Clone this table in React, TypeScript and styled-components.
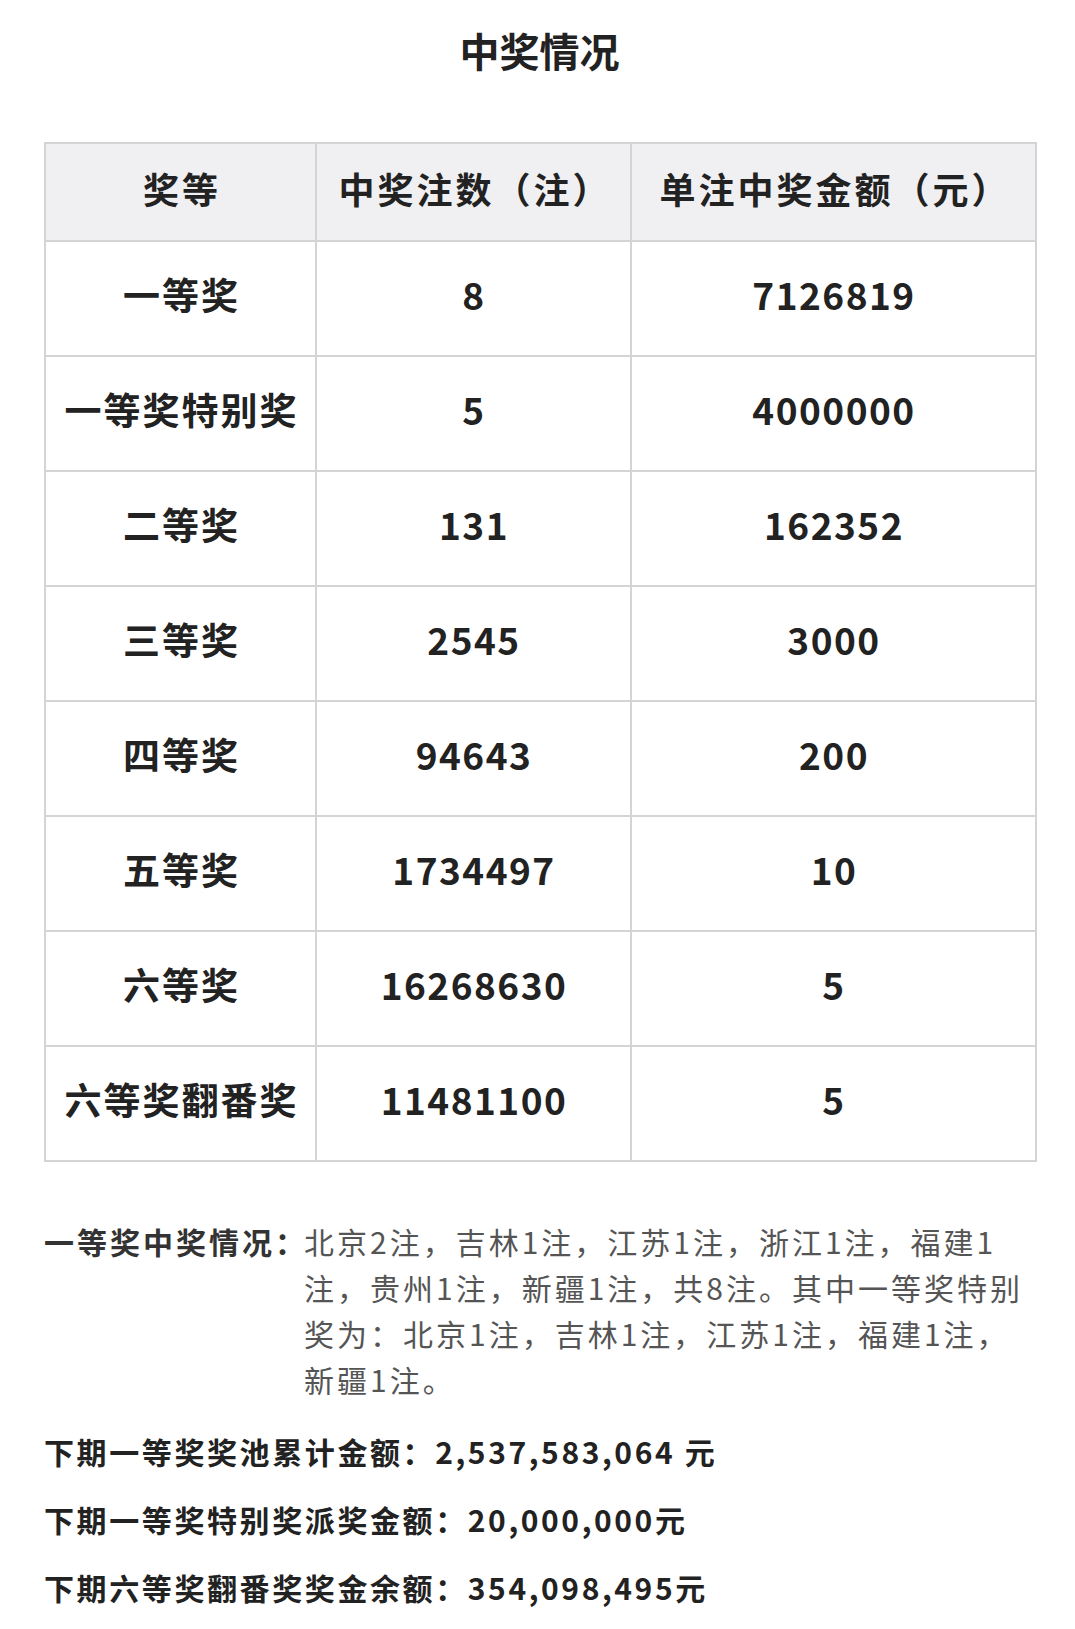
import styled, { createGlobalStyle } from "styled-components";

const GlobalStyle = createGlobalStyle`
  body {
    margin: 0;
    background: #ffffff;
    font-family: "Noto Sans CJK SC", "Noto Sans", sans-serif;
    color: #222222;
  }
`;

const Page = styled.div`
  width: 1075px;
  padding: 20px 40px 40px 44px;
  box-sizing: border-box;
`;

const Title = styled.h1`
  margin: 0;
  text-align: center;
  font-size: 40px;
  font-weight: 700;
  line-height: 60px;
  color: #222222;
`;

const Table = styled.table`
  margin-top: 62px;
  width: 991px;
  border-collapse: collapse;
  border: 2px solid #d4d4d6;
  table-layout: fixed;
`;

const HeadCell = styled.th`
  height: 88px;
  background: #f0f0f3;
  border: 2px solid #d4d4d6;
  font-size: 36px;
  font-weight: 700;
  letter-spacing: 3px;
  color: #222222;
  text-align: center;
  padding: 0 0 8px 3px;
`;

const Cell = styled.td<{ $num?: boolean }>`
  height: 103px;
  border: 2px solid #d4d4d6;
  font-size: 37px;
  font-weight: 700;
  color: #222222;
  text-align: center;
  padding: 0 0 10px ${(p) => (p.$num ? "1px" : "2px")};
  white-space: nowrap;
  letter-spacing: ${(p) => (p.$num ? "1.5px" : "2px")};
`;

const Detail = styled.div`
  display: grid;
  grid-template-columns: 260px 728px;
  margin-top: 56px;
  font-size: 30px;
  line-height: 46px;
  letter-spacing: 3px;
`;

const DetailLabel = styled.div`
  font-weight: 700;
  color: #333333;
  white-space: nowrap;
`;

const DetailText = styled.div`
  color: #555555;
`;

const Summary = styled.div`
  display: flex;
  flex-direction: column;
  gap: 24px;
  margin-top: 27px;
`;

const SummaryLine = styled.div`
  font-size: 30px;
  font-weight: 700;
  line-height: 44px;
  letter-spacing: 2.6px;
  color: #222222;
`;

const rows: [string, string, string][] = [
  ["一等奖", "8", "7126819"],
  ["一等奖特别奖", "5", "4000000"],
  ["二等奖", "131", "162352"],
  ["三等奖", "2545", "3000"],
  ["四等奖", "94643", "200"],
  ["五等奖", "1734497", "10"],
  ["六等奖", "16268630", "5"],
  ["六等奖翻番奖", "11481100", "5"],
];

export default function App() {
  return (
    <>
      <GlobalStyle />
      <Page>
        <Title>中奖情况</Title>
        <Table>
          <colgroup>
            <col style={{ width: 271 }} />
            <col style={{ width: 315 }} />
            <col style={{ width: 405 }} />
          </colgroup>
          <thead>
            <tr>
              <HeadCell>奖等</HeadCell>
              <HeadCell>中奖注数（注）</HeadCell>
              <HeadCell>单注中奖金额（元）</HeadCell>
            </tr>
          </thead>
          <tbody>
            {rows.map(([name, count, amount]) => (
              <tr key={name}>
                <Cell>{name}</Cell>
                <Cell $num>{count}</Cell>
                <Cell $num>{amount}</Cell>
              </tr>
            ))}
          </tbody>
        </Table>
        <Detail>
          <DetailLabel>一等奖中奖情况：</DetailLabel>
          <DetailText>
            北京2注，吉林1注，江苏1注，浙江1注，福建1注，贵州1注，新疆1注，共8注。其中一等奖特别奖为：北京1注，吉林1注，江苏1注，福建1注，新疆1注。
          </DetailText>
        </Detail>
        <Summary>
          <SummaryLine>下期一等奖奖池累计金额：2,537,583,064 元</SummaryLine>
          <SummaryLine>下期一等奖特别奖派奖金额：20,000,000元</SummaryLine>
          <SummaryLine>下期六等奖翻番奖奖金余额：354,098,495元</SummaryLine>
        </Summary>
      </Page>
    </>
  );
}
